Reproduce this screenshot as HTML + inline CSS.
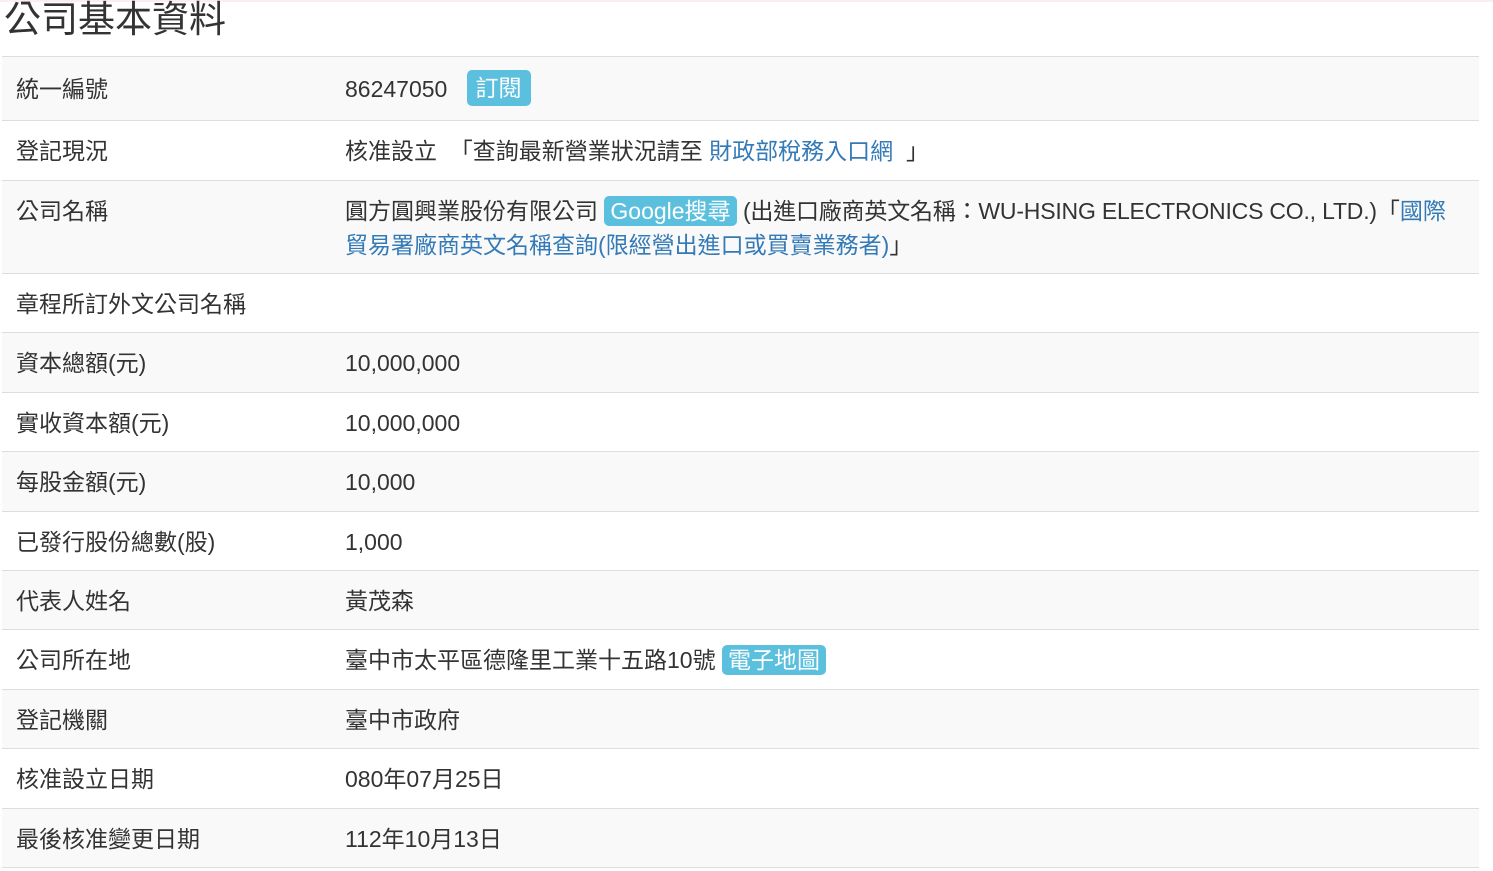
<!DOCTYPE html>
<html><head><meta charset="utf-8"><style>
body{margin:0;background:#fff;font-family:"Liberation Sans","Noto Sans CJK TC",sans-serif;color:#333;width:1493px;height:871px;overflow:hidden;position:relative}
.topline{position:absolute;left:0;top:0;width:1493px;height:2px;background:#fbeef0}
h1{position:absolute;left:4px;top:-8px;margin:0;font-weight:400;font-size:37px;line-height:56px;color:#333}
table{position:absolute;left:2px;top:56px;width:1477px;border-collapse:collapse;font-size:23px}
td{border-top:1px solid #ddd;padding:0 14px;vertical-align:top;line-height:34px;white-space:nowrap}
tr:nth-child(odd) td{background:#f9f9f9}
tr:last-child td{border-bottom:1px solid #ddd}
td.l{width:301px}
td.v{padding-left:14px}
a{color:#337ab7;text-decoration:none}
.b{display:inline-block;background:#5bc0de;color:#fff;border-radius:5px;padding:0 6px;line-height:30px}
.en{letter-spacing:-0.2px}
</style></head><body>
<div class="topline"></div>
<h1>公司基本資料</h1>
<table>
<tr style="height:64px"><td class="l" style="padding-top:15px">統一編號</td><td class="v" style="padding-top:15px">86247050 &nbsp;&nbsp;<span class="b" style="line-height:36px;margin-top:-2px;vertical-align:top;padding:0 9px">訂閱</span></td></tr>
<tr style="height:60px"><td class="l" style="padding-top:13px">登記現況</td><td class="v" style="padding-top:13px">核准設立 &nbsp;「查詢最新營業狀況請至 <a>財政部稅務入口網</a> &nbsp;」</td></tr>
<tr style="height:93px"><td class="l" style="padding-top:13px">公司名稱</td><td class="v" style="padding-top:13px">圓方圓興業股份有限公司 <span class="b">Google搜尋</span> <span class="en">(出進口廠商英文名稱：WU-HSING ELECTRONICS CO., LTD.)</span>「<a>國際</a><br><a>貿易署廠商英文名稱查詢(限經營出進口或買賣業務者)</a>」</td></tr>
<tr style="height:59px"><td class="l" style="padding-top:13px">章程所訂外文公司名稱</td><td class="v"></td></tr>
<tr style="height:60px"><td class="l" style="padding-top:13px">資本總額(元)</td><td class="v" style="padding-top:13px">10,000,000</td></tr>
<tr style="height:59px"><td class="l" style="padding-top:13px">實收資本額(元)</td><td class="v" style="padding-top:13px">10,000,000</td></tr>
<tr style="height:60px"><td class="l" style="padding-top:13px">每股金額(元)</td><td class="v" style="padding-top:13px">10,000</td></tr>
<tr style="height:59px"><td class="l" style="padding-top:13px">已發行股份總數(股)</td><td class="v" style="padding-top:13px">1,000</td></tr>
<tr style="height:59px"><td class="l" style="padding-top:13px">代表人姓名</td><td class="v" style="padding-top:13px">黃茂森</td></tr>
<tr style="height:60px"><td class="l" style="padding-top:13px">公司所在地</td><td class="v" style="padding-top:13px">臺中市太平區德隆里工業十五路10號 <span class="b">電子地圖</span></td></tr>
<tr style="height:59px"><td class="l" style="padding-top:13px">登記機關</td><td class="v" style="padding-top:13px">臺中市政府</td></tr>
<tr style="height:60px"><td class="l" style="padding-top:13px">核准設立日期</td><td class="v" style="padding-top:13px">080年07月25日</td></tr>
<tr style="height:59px"><td class="l" style="padding-top:13px">最後核准變更日期</td><td class="v" style="padding-top:13px">112年10月13日</td></tr>
</table>
</body></html>
